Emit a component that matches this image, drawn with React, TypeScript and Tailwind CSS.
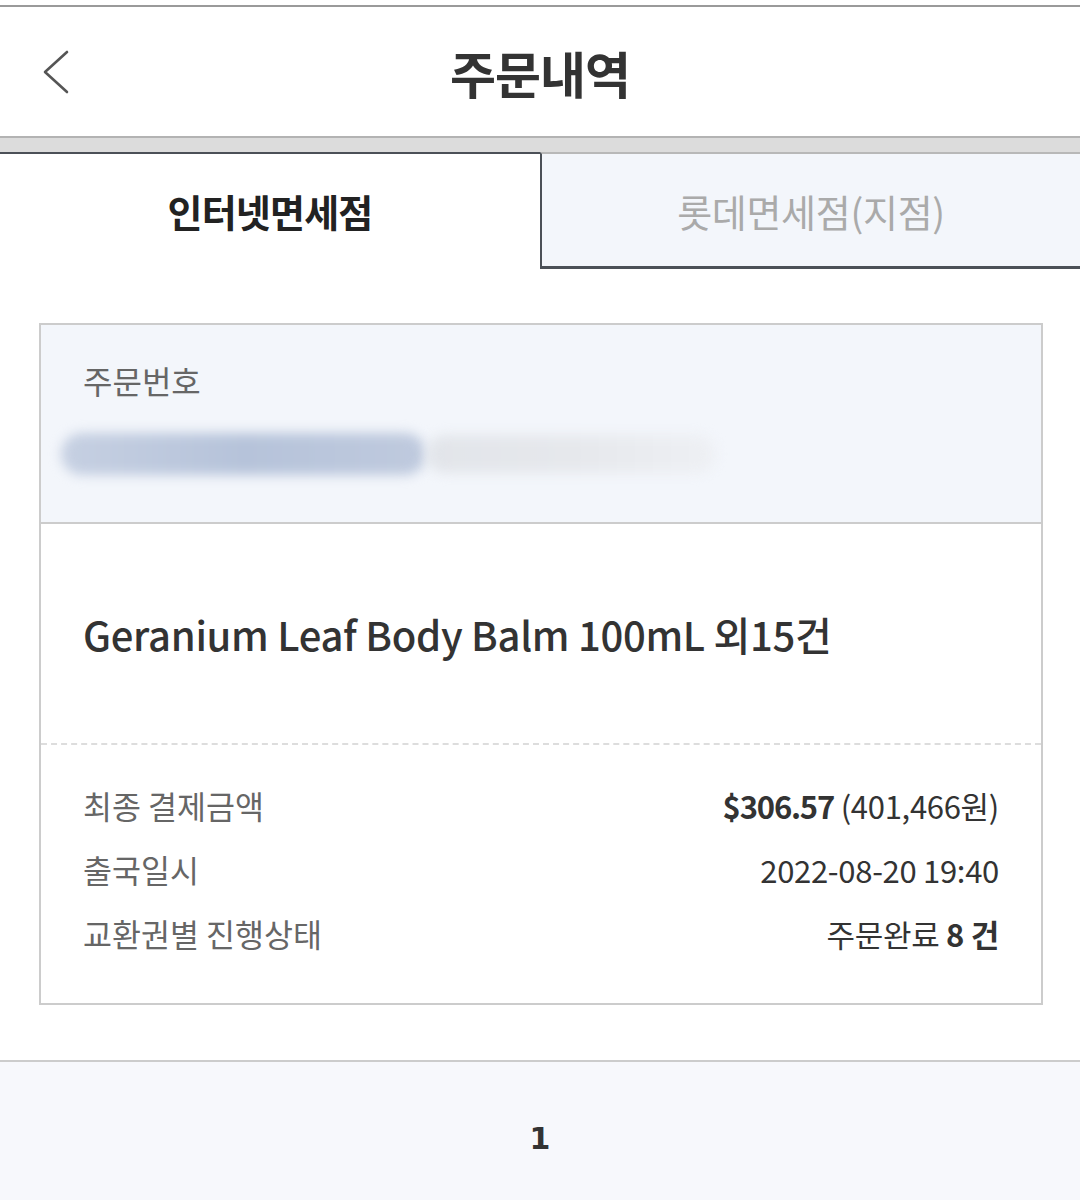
import React from "react";

const rows = [
  { label: "최종 결제금액", value: <><span className="font-bold tracking-[-1.2px]">$306.57</span> (401,466원)</> },
  { label: "출국일시", value: <>2022-08-20 19:40</> },
  { label: "교환권별 진행상태", value: <>주문완료 <span className="font-bold">8 건</span></> },
];

function BackIcon() {
  return (
    <svg width="30" height="46" viewBox="0 0 30 46" fill="none">
      <path d="M26 3 L4 23 L26 43" stroke="#555" strokeWidth="2.6" strokeLinecap="round" strokeLinejoin="round" />
    </svg>
  );
}

export default function App() {
  return (
    <div className="w-[1080px] h-[1200px] bg-white flex flex-col overflow-hidden" style={{ fontFamily: '"Noto Sans CJK KR", "Noto Sans", sans-serif' }}>
      <div className="h-[5px] shrink-0" />
      <div className="h-[2px] bg-[#9a9a9a] shrink-0" />

      {/* header */}
      <div className="relative h-[131px] shrink-0 flex items-center justify-center border-b-2 border-[#b3b3b3]">
        <button className="absolute left-[41px] top-[42px]">
          <BackIcon />
        </button>
        <h1 className="text-[50px] font-bold text-[#333] leading-none tracking-[-1px]">주문내역</h1>
      </div>
      <div className="h-[14px] bg-[#dcdcdc] shrink-0" />

      {/* tabs */}
      <div className="flex h-[117px] shrink-0">
        <div className="w-[540px] border-t-2 border-[#4b5057] bg-white flex items-center justify-center pb-[2px]">
          <span className="text-[38px] font-bold text-[#222] tracking-[-0.8px]">인터넷면세점</span>
        </div>
        <div className="flex-1 border-t-2 border-t-[#b8b8b8] border-l-2 border-l-[#4b5057] border-b-[3px] border-b-[#4b5057] bg-[#f3f6fb] flex items-center justify-center">
          <span className="text-[38px] text-[#aaaaaa] tracking-[-0.3px]">롯데면세점(지점)</span>
        </div>
      </div>

      {/* order card */}
      <div className="ml-[39px] mt-[54px] w-[1004px] border-2 border-[#cccccc] shrink-0">
        <div className="h-[199px] bg-[#f3f6fb] border-b-2 border-[#cccccc] pl-[42px] pt-[35px]">
          <div className="text-[32px] leading-[40px] text-[#666]">주문번호</div>
          <div className="mt-[30px] h-[48px] flex items-center -ml-[22px]">
            <div className="h-[42px] w-[365px] rounded-full bg-gradient-to-r from-[#c6d0e2] via-[#b6c3da] to-[#bfcade] blur-[6px]" />
            <div className="h-[38px] w-[290px] rounded-full bg-gradient-to-r from-[#e2e5ea] via-[#e6e8ec] to-[#eef0f4] blur-[6px]" />
          </div>
        </div>

        <div className="h-[219px] flex items-center pl-[42px]">
          <div className="text-[40px] font-medium text-[#333] tracking-[-0.3px]">Geranium Leaf Body Balm 100mL 외15건</div>
        </div>

        <div className="border-t-2 border-dashed border-[#dddddd] px-[42px] pt-[29px] pb-[37px]">
          {rows.map((r) => (
            <div key={r.label} className="flex justify-between items-center h-[64px]">
              <span className="text-[31.5px] text-[#666]">{r.label}</span>
              <span className="text-[31px] text-[#333] tracking-[-0.3px]">{r.value}</span>
            </div>
          ))}
        </div>
      </div>

      {/* pagination */}
      <div className="mt-[55px] flex-1 border-t-2 border-[#cccccc] bg-[#f7f8fc] flex justify-center pt-[52px]">
        <span className="text-[30px] font-bold text-[#333] leading-[50px]" style={{ fontFamily: '"DejaVu Sans", sans-serif' }}>1</span>
      </div>
    </div>
  );
}
